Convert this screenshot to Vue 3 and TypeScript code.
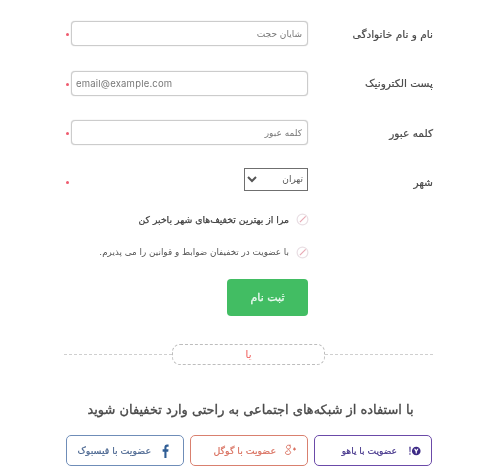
<script setup lang="ts">
const fields = [
  { label: 'نام و نام خانوادگی', value: 'شایان حجت', dir: 'rtl' },
  { label: 'پست الکترونیک', value: 'email@example.com', dir: 'ltr' },
  { label: 'کلمه عبور', value: 'کلمه عبور', dir: 'rtl' },
]
const checks = ['مرا از بهترین تخفیف‌های شهر باخبر کن', 'با عضویت در تخفیفان ضوابط و قوانین را می پذیرم.']
</script>

<template>
  <main class="page" dir="rtl">
    <div v-for="f in fields" :key="f.label" class="row">
      <label class="label">{{ f.label }}</label>
      <input class="field" :class="{ latin: f.dir === 'ltr' }" :dir="f.dir" :value="f.value" />
      <span class="star"></span>
    </div>

    <div class="row city">
      <label class="label">شهر</label>
      <div class="city-box">
        <select class="select">
          <option>تهران</option>
        </select>
      </div>
      <span class="star"></span>
    </div>

    <div class="checks">
      <div v-for="(c, i) in checks" :key="c" class="check" :class="i === 0 ? 'first' : 'second'">
        <svg width="13" height="13" viewBox="0 0 14 14" fill="none">
          <circle cx="7" cy="7" r="5.8" stroke="#e9dfe4" stroke-width="1.3" />
          <path d="M4.2 9.8L10.4 3.6" stroke="#e8a9b4" stroke-width="1.3" />
        </svg>
        <span>{{ c }}</span>
      </div>
    </div>

    <button class="submit">ثبت نام</button>

    <div class="divider">
      <span class="line"></span>
      <span class="pill">یا</span>
      <span class="line"></span>
    </div>

    <h2 class="title">با استفاده از شبکه‌های اجتماعی به راحتی وارد تخفیفان شوید</h2>

    <div class="socials">
      <a class="social yahoo">
        <svg width="14" height="10" viewBox="0 0 16 12">
          <path d="M1.2 1h1.6l-.3 6.6H1.5zM1.3 8.8h1.3V10.6H1.3z" fill="#3d2a86" />
          <circle cx="9.5" cy="6" r="5.2" fill="#3d2a86" />
          <path d="M6.8 3.4h1.7l1 1.8 1-1.8h1.7L10.2 7v2H8.8V7z" fill="#fff" />
        </svg>
        <span>عضویت با یاهو</span>
      </a>
      <a class="social google">
        <svg width="13" height="15" viewBox="0 0 18 17" fill="none" stroke="#d9705f" stroke-width="1.3">
          <path d="M9.5 1.2H6.2C4.4 1.2 3.4 2.4 3.4 3.8s1.1 2.7 2.8 2.7c1.6 0 2.7-1.2 2.7-2.7 0-1.3-.9-2.3-1.7-2.5" />
          <path d="M6.6 6.6c-.6.7-.3 1.2.6 1.9 1.2.9 2 1.5 2 2.7 0 1.5-1.5 2.8-3.8 2.8-2.1 0-3.4-1-3.4-2.4 0-1.5 1.5-2.5 3.6-2.5" />
          <path d="M12.5 6.5h4M14.5 4.5v4" stroke-width="1.6" />
        </svg>
        <span>عضویت با گوگل</span>
      </a>
      <a class="social facebook">
        <svg width="7" height="14" viewBox="0 0 10 17" preserveAspectRatio="none">
          <path d="M6.4 17V9.5h2.5l.4-3H6.4V4.7c0-.9.3-1.4 1.5-1.4h1.5V.6C9.1.6 8.2.5 7.2.5 5 .5 3.4 1.9 3.4 4.3v2.2H.9v3h2.5V17z" fill="#2f5d95" />
        </svg>
        <span>عضویت با فیسبوک</span>
      </a>
    </div>
  </main>
</template>

<style scoped>
.page {
  width: 500px;
  height: 471px;
  box-sizing: border-box;
  padding: 21px 67px 0 67px;
  font-family: "DejaVu Sans", "Noto Sans", sans-serif;
  color: #444;
  overflow: hidden;
  filter: blur(0.35px);
}
.row {
  display: flex;
  align-items: center;
  height: 25px;
  margin-bottom: 24.5px;
}
.label {
  width: 125px;
  flex: none;
  font-size: 10.6px;
  color: #4a4a4a;
  -webkit-text-stroke: 0.2px #4a4a4a;
  white-space: nowrap;
}
.field {
  width: 237px;
  height: 25px;
  box-sizing: border-box;
  flex: none;
  border: 1px solid #ccc;
  border-radius: 4px;
  padding: 0 5px;
  font-family: inherit;
  font-size: 9px;
  color: #777;
  outline: none;
  box-shadow: 0 0 1px #bbb;
}
.field.latin {
  font-family: "Inter", sans-serif;
  font-size: 9.5px;
  letter-spacing: 0.2px;
  padding: 0 4px;
}
.star {
  width: 3px;
  height: 3px;
  margin-top: 2px;
  margin-right: 2px;
  flex: none;
  border-radius: 50%;
  background: #ef5a6e;
}
.city {
  height: 23px;
  margin-top: -2px;
  margin-bottom: 21px;
}
.city .label,
.city .star {
  margin-top: 6px;
}
.city-box {
  width: 237px;
  flex: none;
}
.select {
  display: block;
  width: 64px;
  height: 23px;
  border: 1px solid #6f6f6f;
  border-radius: 0;
  background: #fff;
  font-family: inherit;
  font-size: 9px;
  color: #555;
}
.checks {
  margin-right: 124px;
  display: flex;
  flex-direction: column;
  gap: 18px;
}
.check {
  display: flex;
  align-items: center;
  gap: 7px;
  height: 15px;
  white-space: nowrap;
  color: #555;
}
.first {
  font-size: 9.3px;
  color: #3f3f3f;
  -webkit-text-stroke: 0.25px #3f3f3f;
}
.second {
  font-size: 8.8px;
}
.submit {
  display: block;
  width: 81px;
  height: 37px;
  margin: 19px 125px 0 0;
  border: 0;
  border-radius: 4px;
  background: #42bd63;
  color: #eafaf0;
  font-family: inherit;
  font-size: 11px;
  -webkit-text-stroke: 0.3px #eafaf0;
}
.divider {
  display: flex;
  align-items: center;
  width: 369px;
  margin: 28.5px 0 0;
}
.line {
  flex: 1;
  border-top: 1px dashed #cfcfcf;
}
.pill {
  width: 153px;
  height: 21px;
  box-sizing: border-box;
  border: 1px dashed #bdbdbd;
  border-radius: 8px;
  text-align: center;
  font-size: 10px;
  line-height: 19px;
  color: #ef5350;
}
.title {
  margin: 37px -1px 0 0;
  text-align: center;
  font-size: 12.95px;
  font-weight: 400;
  color: #4a4a4a;
  -webkit-text-stroke: 0.35px #4a4a4a;
  white-space: nowrap;
}
.socials {
  display: flex;
  gap: 6px;
  margin: 18px 1px 0 0;
}
.social {
  width: 118px;
  height: 31px;
  box-sizing: border-box;
  flex: none;
  display: flex;
  align-items: center;
  gap: 11px;
  padding: 0 9px;
  border: 1.5px solid;
  border-radius: 5px;
  font-size: 9.1px;
  -webkit-text-stroke: 0.2px currentColor;
  white-space: nowrap;
}
.yahoo {
  border-color: #6b4aa8;
  color: #43338a;
}
.google {
  border-color: #d9806f;
  color: #d9705f;
  gap: 8px;
  padding-right: 10px;
  font-size: 9.35px;
}
.facebook {
  border-color: #6f8db8;
  color: #48648f;
  padding-right: 14px;
  font-size: 9.4px;
}
</style>
